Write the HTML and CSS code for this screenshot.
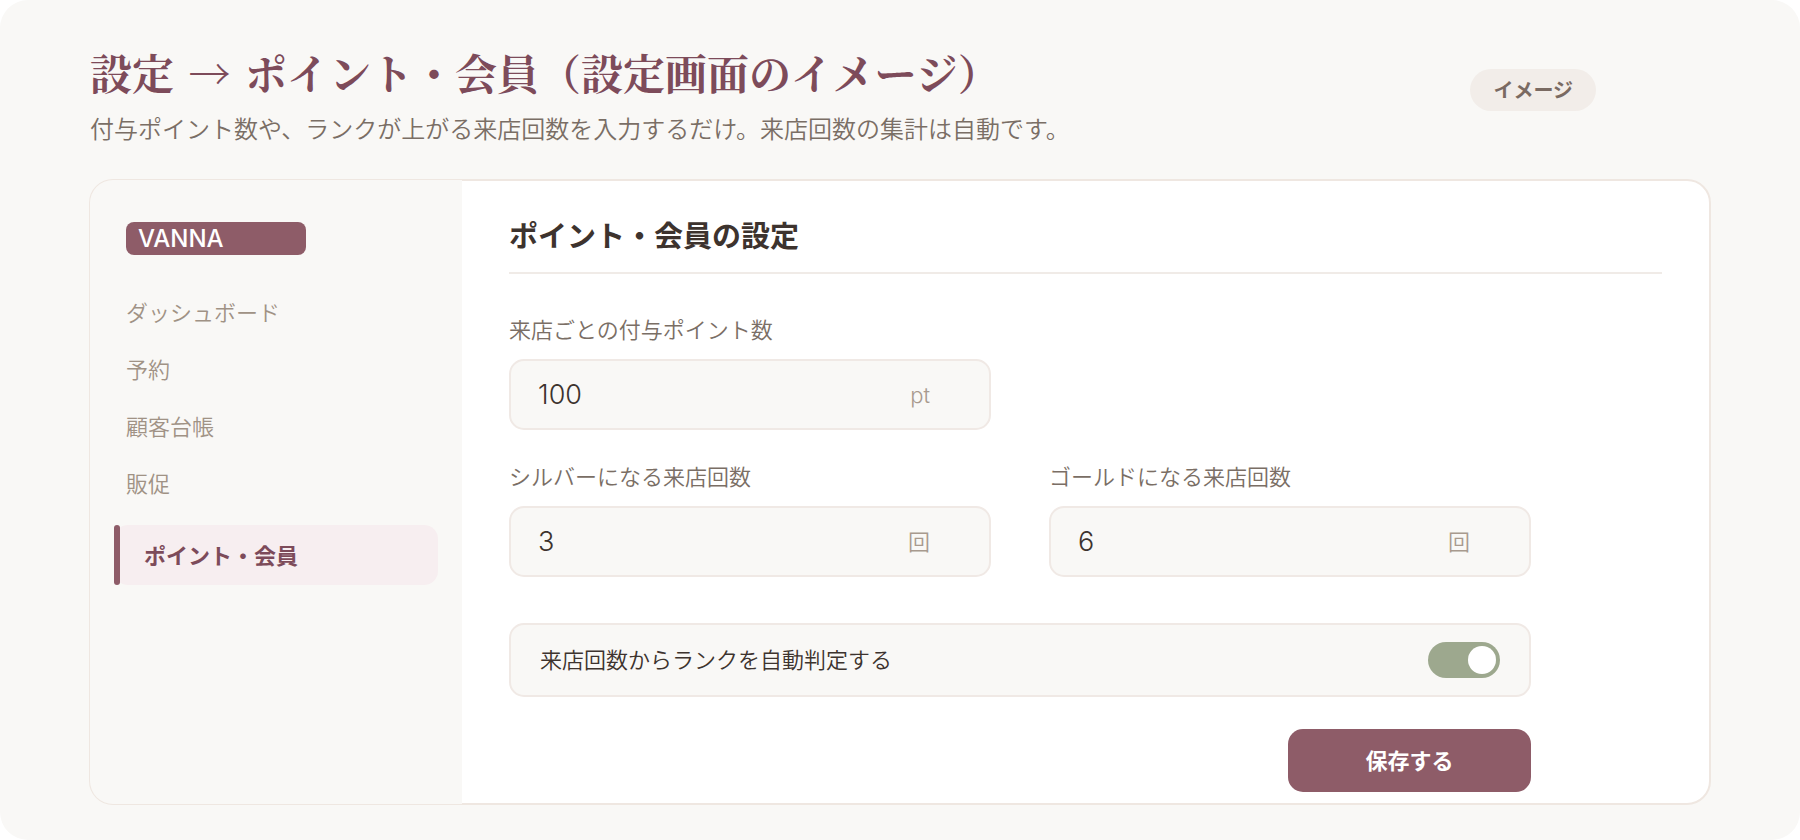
FILE: index.html
```html
<!DOCTYPE html>
<html lang="ja">
<head>
    <meta charset="UTF-8">
    <meta name="viewport" content="width=device-width, initial-scale=1.0">
    <title>設定 → ポイント・会員</title>
    <link rel="stylesheet" href="styles.css">
</head>
<body>
    <div class="page">
        <header class="page-header">
            <div>
                <h1 class="page-title">設定 <span class="arrow">→</span> ポイント・会員（設定画面のイメージ）</h1>
                <p class="page-lead">付与ポイント数や、ランクが上がる来店回数を入力するだけ。来店回数の集計は自動です。</p>
            </div>
            <span class="badge">イメージ</span>
        </header>

        <div class="card">
            <aside class="sidebar">
                <div class="logo">VANNA</div>
                <nav class="nav">
                    <a href="#">ダッシュボード</a>
                    <a href="#">予約</a>
                    <a href="#">顧客台帳</a>
                    <a href="#">販促</a>
                    <a href="#" class="active" aria-current="page">ポイント・会員</a>
                </nav>
            </aside>

            <main class="content">
                <h2 class="content-title">ポイント・会員の設定</h2>
                <form class="form">
                    <div class="field">
                        <label for="points">来店ごとの付与ポイント数</label>
                        <div class="input-box">
                            <input type="text" inputmode="numeric" id="points" value="100">
                            <span class="unit">pt</span>
                        </div>
                    </div>
                    <div class="field silver">
                        <label for="silver">シルバーになる来店回数</label>
                        <div class="input-box">
                            <input type="text" inputmode="numeric" id="silver" value="3">
                            <span class="unit">回</span>
                        </div>
                    </div>
                    <div class="field">
                        <label for="gold">ゴールドになる来店回数</label>
                        <div class="input-box">
                            <input type="text" inputmode="numeric" id="gold" value="6">
                            <span class="unit">回</span>
                        </div>
                    </div>
                    <div class="toggle-row">
                        <label for="autoRank">来店回数からランクを自動判定する</label>
                        <input type="checkbox" role="switch" id="autoRank" class="toggle" checked>
                    </div>
                    <button type="button" class="save">保存する</button>
                </form>
            </main>
        </div>
    </div>
</body>
</html>
```
FILE: styles.css
```css
* {
    box-sizing: border-box;
}
body {
    margin: 0;
    background: #fff;
    color: #3d332e;
    font-family: "Hiragino Sans", "Noto Sans CJK JP", sans-serif;
    font-size: 22px;
    font-weight: 350;
}
.page {
    min-height: 100vh;
    padding: 42px 89px 35px;
    background: #f9f8f6;
    border-radius: 28px;
}

/* header */
.page-header {
    display: flex;
    justify-content: space-between;
    align-items: flex-start;
    margin-bottom: 33px;
    padding: 0 115px 0 1px;
}
.page-title {
    margin: 0 0 8px;
    color: #7d4b5a;
    font-family: "Hiragino Mincho ProN", "Noto Serif CJK JP", "Noto Sans CJK JP", serif;
    font-size: 42px;
    font-weight: 700;
    line-height: 60px;
}
.arrow {
    margin: 0 4px;
}
.page-lead {
    margin: 0;
    color: #7a6e65;
    font-size: 24px;
    line-height: 36px;
}
.badge {
    flex: none;
    margin-top: 27px;
    padding: 0 23px;
    border-radius: 21px;
    background: #f2ede9;
    color: #7a6a62;
    font-size: 20px;
    font-weight: 600;
    line-height: 42px;
}

/* card */
.card {
    display: flex;
    border: 2px solid #efe7e1;
    border-radius: 24px;
    background: #fff;
}
/* covers the inner half of the card border */
.sidebar {
    flex: none;
    width: 372px;
    margin: -1px 0 -1px -1px;
    padding: 42px 24px;
    border-radius: 23px 0 0 23px;
    background: #f9f8f6;
}
.logo {
    width: 180px;
    margin: 0 12px 28px;
    padding-left: 12px;
    border-radius: 8px;
    background: #8e5c68;
    color: #fff;
    font-family: Inter, sans-serif;
    font-size: 24px;
    font-weight: 500;
    line-height: 33px;
}
.nav {
    display: flex;
    flex-direction: column;
}
.nav a {
    padding: 0 12px;
    color: #a09285;
    line-height: 57px;
    text-decoration: none;
}
.nav .active {
    position: relative;
    margin-top: 14px;
    padding: 0 12px 2px 30px;
    border-radius: 14px;
    background: #f7eef0;
    color: #7d4b5a;
    font-weight: 600;
    line-height: 58px;
}
.nav .active::before {
    content: "";
    position: absolute;
    top: 0;
    bottom: 0;
    left: 0;
    width: 6px;
    border-radius: 3px;
    background: #8e5c68;
}
.content {
    flex: 1;
    min-width: 0;
    padding: 34px 47px 11px;
}
.content-title {
    margin: 0 0 40px;
    padding-bottom: 19px;
    border-bottom: 2px solid #f0ebe7;
    font-size: 29px;
    font-weight: 600;
    line-height: 38px;
}

/* form */
.form {
    display: grid;
    grid-template-columns: repeat(2, minmax(0, 1fr));
    column-gap: 58px;
    row-gap: 31px;
    max-width: 1022px;
}
.silver {
    grid-column: 1;
}
.field label {
    display: block;
    margin-bottom: 17px;
    color: #7a6e65;
    line-height: 28px;
}
.input-box {
    display: flex;
    align-items: center;
    height: 71px;
    padding: 0 59px 0 27px;
    border: 2px solid #f0e9e5;
    border-radius: 15px;
    background: #f9f8f6;
}
.input-box input {
    flex: 1;
    min-width: 0;
    padding: 0;
    border: none;
    outline: none;
    background: none;
    color: #3d332e;
    font-family: Inter, sans-serif;
    font-size: 27px;
    font-weight: 300;
}
.unit {
    color: #a89a8e;
    font-family: Inter, "Noto Sans CJK JP", sans-serif;
    line-height: 28px;
}
.toggle-row {
    grid-column: 1 / -1;
    display: flex;
    justify-content: space-between;
    align-items: center;
    height: 74px;
    margin-top: 15px;
    padding: 0 29px;
    border: 2px solid #f0e9e5;
    border-radius: 15px;
    background: #f9f8f6;
}
.toggle-row label {
    padding-bottom: 4px;
}
.toggle {
    appearance: none;
    display: flex;
    width: 72px;
    height: 36px;
    margin: 0;
    padding: 4px;
    border-radius: 18px;
    background: #d8d0c9;
    cursor: pointer;
}
.toggle::before {
    content: "";
    width: 28px;
    height: 28px;
    border-radius: 50%;
    background: #fff;
}
.toggle:checked {
    justify-content: flex-end;
    background: #9da88e;
}
.save {
    grid-column: 2;
    justify-self: end;
    width: 243px;
    height: 63px;
    margin-top: 1px;
    padding: 0 0 3px;
    border: none;
    border-radius: 15px;
    background: #8e5c68;
    color: #fff;
    font-family: inherit;
    font-size: 22px;
    font-weight: 600;
    cursor: pointer;
}
```
